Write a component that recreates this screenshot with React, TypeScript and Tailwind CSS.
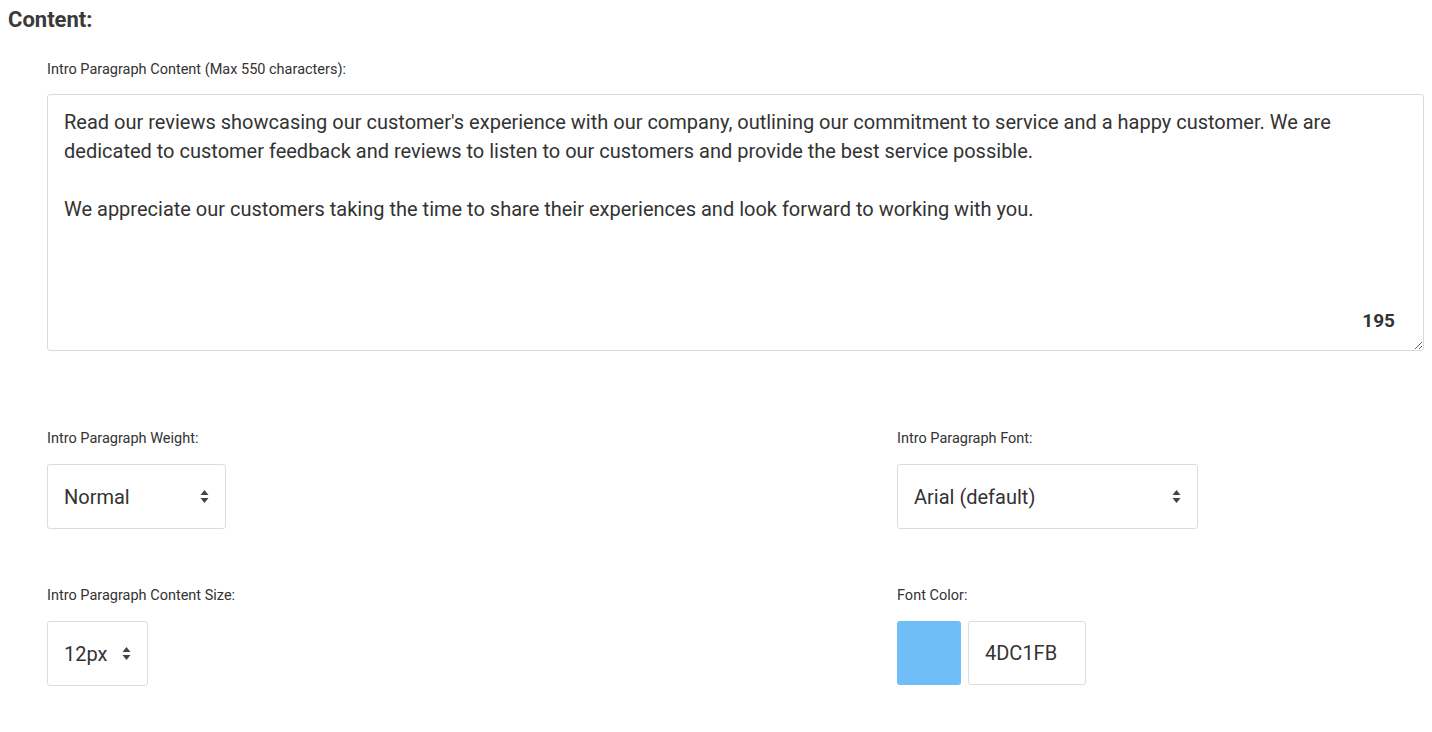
const intro = `Read our reviews showcasing our customer's experience with our company, outlining our commitment to service and a happy customer. We are dedicated to customer feedback and reviews to listen to our customers and provide the best service possible.

We appreciate our customers taking the time to share their experiences and look forward to working with you.`;

const SortIcon = () => (
  <svg width="9" height="15" viewBox="0 0 9 15" className="shrink-0">
    <path d="M4.5 1 L8.5 6 H0.5 Z" fill="#444" />
    <path d="M4.5 14 L8.5 9 H0.5 Z" fill="#444" />
  </svg>
);

const SelectBox = ({ value, width }: { value: string; width: string }) => (
  <div
    className={`flex h-[65px] items-center justify-between rounded-[3px] border border-[#dcdcdc] bg-white pl-4 pr-4 text-[20px] text-[#333] ${width}`}
  >
    <span>{value}</span>
    <SortIcon />
  </div>
);

const Label = ({ children }: { children: string }) => (
  <div className="text-[14.5px] leading-[20px] text-[#333]">{children}</div>
);

export default function App() {
  return (
    <div className="min-h-screen bg-white font-['Roboto','Liberation_Sans',sans-serif] text-[#333]">
      <div className="pt-[7px] pl-[8px] text-[22px] leading-[26px] font-bold text-[#3a3a3a]">Content:</div>

      <div className="pl-[47px] pr-[8px]">
        <div className="mt-[27px]">
          <Label>Intro Paragraph Content (Max 550 characters):</Label>
        </div>
        <div className="relative mt-[14px]">
          <textarea
            defaultValue={intro}
            className="block h-[257px] w-full resize-y rounded-[3px] border border-[#d9d9e0] bg-white pl-4 pr-[40px] pt-[13px] text-[20px] leading-[29px] text-[#333] outline-none"
          />
          <span className="absolute right-[29px] bottom-[16px] text-[19px] font-bold text-[#333]">195</span>
        </div>

        <div className="mt-[78px] grid grid-cols-[850px_1fr] gap-y-[57px]">
          <div>
            <Label>Intro Paragraph Weight:</Label>
            <div className="mt-[15px]">
              <SelectBox value="Normal" width="w-[179px]" />
            </div>
          </div>
          <div>
            <Label>Intro Paragraph Font:</Label>
            <div className="mt-[15px]">
              <SelectBox value="Arial (default)" width="w-[301px]" />
            </div>
          </div>
          <div>
            <Label>Intro Paragraph Content Size:</Label>
            <div className="mt-[15px]">
              <SelectBox value="12px" width="w-[101px]" />
            </div>
          </div>
          <div>
            <Label>Font Color:</Label>
            <div className="mt-[15px] flex gap-[7px]">
              <div className="h-[64px] w-[64px] rounded-[3px] bg-[#6fbef7]" />
              <div className="flex h-[64px] w-[118px] items-center rounded-[3px] border border-[#dcdcdc] pl-4 text-[20px] text-[#333]">
                4DC1FB
              </div>
            </div>
          </div>
        </div>
      </div>
    </div>
  );
}
